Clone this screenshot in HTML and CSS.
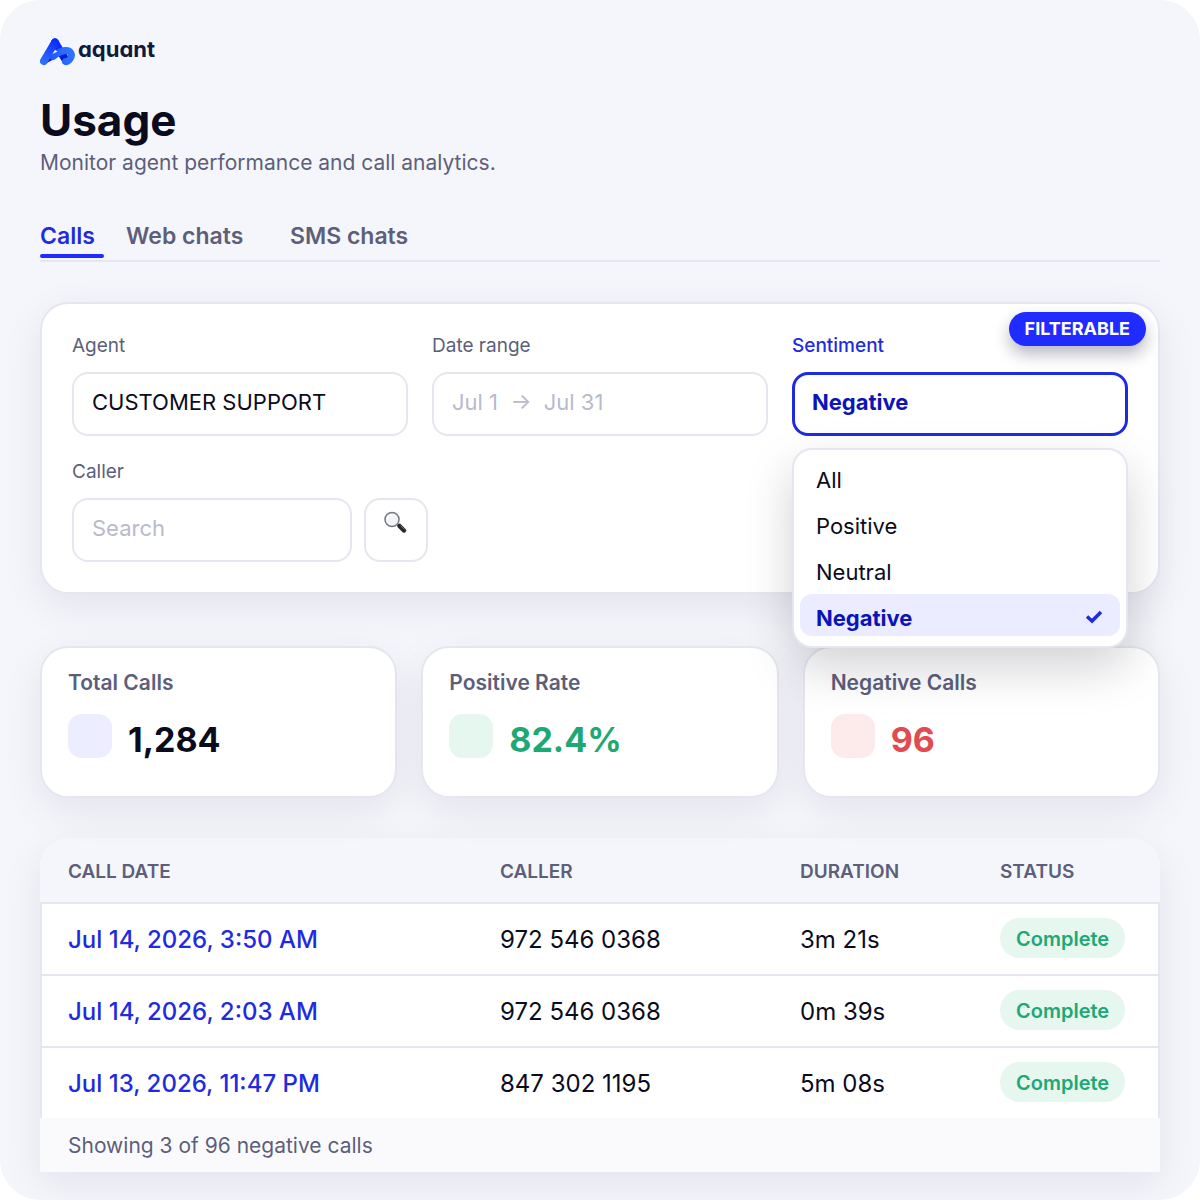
FILE: index.html
```html
<!DOCTYPE html>
<html lang="en">
<head>
<meta charset="UTF-8">
<meta name="viewport" content="width=device-width, initial-scale=1.0">
<title>Usage - aquant</title>
<link rel="stylesheet" href="styles.css">
</head>
<body>

<main class="page">
    <div class="logo">
        <svg class="logo-mark" width="36" height="28" viewBox="0 0 36 28" fill="none" stroke-linecap="round" stroke-linejoin="round" aria-hidden="true">
            <defs>
                <linearGradient id="leg" x1="4" y1="24" x2="16" y2="3" gradientUnits="userSpaceOnUse">
                    <stop offset="0" stop-color="#2f6dff"/>
                    <stop offset="1" stop-color="#0a2cff"/>
                </linearGradient>
                <linearGradient id="back" x1="15" y1="4" x2="26" y2="24" gradientUnits="userSpaceOnUse">
                    <stop offset="0" stop-color="#0a2cff"/>
                    <stop offset="0.6" stop-color="#0a2cff"/>
                    <stop offset="0.8" stop-color="#0617b0"/>
                    <stop offset="1" stop-color="#1030e0"/>
                </linearGradient>
                <linearGradient id="loop" x1="5" y1="24" x2="31" y2="14" gradientUnits="userSpaceOnUse">
                    <stop offset="0" stop-color="#1c50ff"/>
                    <stop offset="1" stop-color="#2f74ff"/>
                </linearGradient>
            </defs>
            <path d="M15 4.500 L26 22.500" stroke="url(#back)" stroke-width="8"/>
            <path d="M4 23 C11 22 16 14.500 24 12.500" stroke="#0617b0" stroke-width="5"/>
            <path d="M4 23 L15 4.500" stroke="url(#leg)" stroke-width="8"/>
            <path d="M13 18.500 C17 15.500 20 13 25 12.500 C31 12 33 17 30 21 C28.500 23 27 24 25.500 23.500" stroke="url(#loop)" stroke-width="7"/>
            <path d="M12.500 16 L15 12 L17.500 13.500 Z" fill="#f5f6fb"/>
        </svg>
        <span class="logo-name">aquant</span>
    </div>

    <h1 class="title">Usage</h1>
    <p class="subtitle">Monitor agent performance and call analytics.</p>

    <nav class="tabs">
        <button class="tab active" type="button">Calls</button>
        <button class="tab" type="button">Web chats</button>
        <button class="tab" type="button">SMS chats</button>
    </nav>

    <form class="filters">
        <span class="badge">FILTERABLE</span>

        <div class="field">
            <label for="agent">Agent</label>
            <input class="control" id="agent" type="text" value="CUSTOMER SUPPORT">
        </div>

        <div class="field">
            <label for="dates">Date range</label>
            <input class="control" id="dates" type="text" placeholder="Jul 1  →  Jul 31">
        </div>

        <div class="field field-sentiment">
            <label for="sentiment">Sentiment</label>
            <select class="control" id="sentiment">
                <option>All</option>
                <option>Positive</option>
                <option>Neutral</option>
                <option selected>Negative</option>
            </select>
            <ul class="menu">
                <li><button class="menu-item" type="button">All</button></li>
                <li><button class="menu-item" type="button">Positive</button></li>
                <li><button class="menu-item" type="button">Neutral</button></li>
                <li>
                    <button class="menu-item selected" type="button">
                        Negative
                        <svg width="20" height="20" viewBox="0 0 20 20" fill="none" stroke="#1f2be0" stroke-width="3.500" aria-hidden="true">
                            <path d="M3 8.500 L8 13 L17 4"/>
                        </svg>
                    </button>
                </li>
            </ul>
        </div>

        <div class="field field-caller">
            <label for="caller">Caller</label>
            <div class="search">
                <input class="control" id="caller" type="text" placeholder="Search">
                <button class="search-btn" type="submit" aria-label="Search">
                    <svg width="24" height="24" viewBox="0 0 24 24" fill="none" aria-hidden="true">
                        <path d="M12.500 12.500 L16 16" stroke="#8b9096" stroke-width="2"/>
                        <path d="M15.500 15 L20 19.500" stroke="#25282c" stroke-width="4.500" stroke-linecap="round"/>
                        <path d="M16.500 14.500 L20.500 18.500" stroke="#6b6f75" stroke-width="1"/>
                        <circle cx="8" cy="8.500" r="7" fill="#f1f5f6" stroke="#73797f" stroke-width="1.500"/>
                        <path d="M3.500 8 A4.500 4.500 0 0 1 7.500 4" stroke="#ffffff" stroke-width="1.500"/>
                    </svg>
                </button>
            </div>
        </div>
    </form>

    <section class="stats">
        <div class="stat">
            <div class="stat-label">Total Calls</div>
            <div class="stat-row">
                <span class="stat-icon blue"></span>
                <span class="stat-value">1,284</span>
            </div>
        </div>
        <div class="stat">
            <div class="stat-label">Positive Rate</div>
            <div class="stat-row">
                <span class="stat-icon green"></span>
                <span class="stat-value positive">82.4%</span>
            </div>
        </div>
        <div class="stat">
            <div class="stat-label">Negative Calls</div>
            <div class="stat-row">
                <span class="stat-icon red"></span>
                <span class="stat-value negative">96</span>
            </div>
        </div>
    </section>

    <section class="calls">
        <table class="calls-table">
            <colgroup>
                <col>
                <col class="col-caller">
                <col class="col-duration">
                <col class="col-status">
            </colgroup>
            <thead>
                <tr>
                    <th>CALL DATE</th>
                    <th>CALLER</th>
                    <th>DURATION</th>
                    <th>STATUS</th>
                </tr>
            </thead>
            <tbody>
                <tr>
                    <td><a href="#">Jul 14, 2026, 3:50 AM</a></td>
                    <td>972 546 0368</td>
                    <td>3m 21s</td>
                    <td><span class="pill">Complete</span></td>
                </tr>
                <tr>
                    <td><a href="#">Jul 14, 2026, 2:03 AM</a></td>
                    <td>972 546 0368</td>
                    <td>0m 39s</td>
                    <td><span class="pill">Complete</span></td>
                </tr>
                <tr>
                    <td><a href="#">Jul 13, 2026, 11:47 PM</a></td>
                    <td>847 302 1195</td>
                    <td>5m 08s</td>
                    <td><span class="pill">Complete</span></td>
                </tr>
            </tbody>
        </table>
        <div class="calls-footer">Showing 3 of 96 negative calls</div>
    </section>
</main>

</body>
</html>
```
FILE: styles.css
```css
* {
    box-sizing: border-box;
}

body {
    margin: 0;
    background: #ffffff;
    color: #0b0b1e;
    font-family: Inter, "Liberation Sans", sans-serif;
    font-size: 22px;
}

button, input, select {
    font: inherit;
    color: inherit;
}

.page {
    min-height: 100vh;
    padding: 38px 40px 28px;
    background: #f5f6fb;
    border-radius: 40px;
    overflow: hidden;
}

/* header */

.logo {
    display: flex;
    gap: 2px;
    height: 28px;
}

.logo-name {
    font-size: 22px;
    font-weight: 700;
    line-height: 22px;
    color: #0f1a3c;
    font-feature-settings: "cv11";
}

.title {
    margin: 26px 0 0;
    font-size: 44px;
    font-weight: 700;
    line-height: 56px;
}

.subtitle {
    margin: 0;
    font-size: 21px;
    line-height: 30px;
    color: #5d5f7a;
}

.tabs {
    display: grid;
    grid-template-columns: 64px 142px auto;
    justify-content: start;
    gap: 22px;
    margin-top: 42px;
    padding-bottom: 2px;
    border-bottom: 2px solid #e6e6f0;
}

.tab {
    padding: 0;
    border: 0;
    background: none;
    text-align: left;
    font-size: 23px;
    font-weight: 600;
    line-height: 32px;
    color: #5d5f7a;
    cursor: pointer;
}

.tab::after {
    content: "";
    display: block;
    height: 4px;
    margin-top: 2px;
    border-radius: 2px;
}

.tab.active {
    color: #1f2be0;
}

.tab.active::after {
    background: #1f2bff;
}

/* filters */

.filters {
    position: relative;
    display: grid;
    grid-template-columns: repeat(3, 1fr);
    gap: 22px 24px;
    margin-top: 40px;
    padding: 28px 30px 30px;
    background: #ffffff;
    border: 2px solid #e6e6f0;
    border-radius: 28px;
    box-shadow: 0 12px 40px rgba(16, 16, 60, 0.08);
}

.badge {
    position: absolute;
    top: 8px;
    right: 12px;
    padding: 0 16px;
    border-radius: 17px;
    background: #1f2bff;
    color: #ffffff;
    font-size: 18px;
    font-weight: 700;
    line-height: 34px;
    box-shadow: 0 8px 16px rgba(16, 16, 60, 0.3);
}

.field {
    display: flex;
    flex-direction: column;
    gap: 12px;
    min-width: 0;
}

.field label {
    font-size: 19px;
    line-height: 28px;
    color: #5d5f7a;
}

.control {
    appearance: none;
    width: 100%;
    height: 64px;
    padding: 0 18px 4px;
    background: #ffffff;
    border: 2px solid #e6e6f0;
    border-radius: 16px;
    outline: none;
}

.control::placeholder {
    color: #b9bacb;
    opacity: 1;
    white-space: pre;
}

.field-sentiment {
    position: relative;
}

.field-sentiment label {
    color: #1f2be0;
    font-weight: 500;
}

.field-sentiment .control {
    padding: 0 17px 4px;
    border: 3px solid #1f2be0;
    color: #0a14b8;
    font-weight: 700;
}

.menu {
    position: absolute;
    top: 116px;
    left: 0;
    right: 0;
    z-index: 1;
    display: grid;
    gap: 4px;
    margin: 0;
    padding: 6px 6px 10px;
    list-style: none;
    background: #ffffff;
    border: 2px solid #e6e6f0;
    border-radius: 20px;
    box-shadow: 0 20px 48px rgba(11, 11, 30, 0.18);
}

.menu-item {
    display: flex;
    align-items: center;
    justify-content: space-between;
    width: 100%;
    height: 42px;
    padding: 6px 16px 0;
    border: 0;
    border-radius: 12px;
    background: none;
    cursor: pointer;
}

.menu-item.selected {
    background: #ebecff;
    color: #0a14b8;
    font-weight: 700;
}

.field-caller {
    grid-column: 1 / span 2;
}

.search {
    display: flex;
    gap: 12px;
}

.search .control {
    width: 280px;
}

.search-btn {
    width: 64px;
    height: 64px;
    padding: 0 0 14px;
    background: #ffffff;
    border: 2px solid #e6e6f0;
    border-radius: 16px;
    line-height: 0;
    cursor: pointer;
}

/* stat cards */

.stats {
    display: grid;
    grid-template-columns: repeat(3, 1fr);
    gap: 24px;
    margin-top: 52px;
}

.stat {
    padding: 20px 26px 30px;
    background: #ffffff;
    border: 2px solid #e6e6f0;
    border-radius: 28px;
    box-shadow: 0 12px 40px rgba(16, 16, 60, 0.08);
}

.stat-label {
    font-size: 21px;
    font-weight: 600;
    line-height: 30px;
    color: #5d5f7a;
}

.stat-row {
    display: flex;
    gap: 16px;
    margin-top: 16px;
}

.stat-icon {
    width: 44px;
    height: 44px;
    border-radius: 14px;
}

.stat-icon.blue {
    background: #ecedff;
}

.stat-icon.green {
    background: #e5f7ef;
}

.stat-icon.red {
    background: #fdeaea;
}

.stat-value {
    font-size: 34px;
    font-weight: 700;
    line-height: 52px;
}

.stat-value.positive {
    color: #1fa774;
}

.stat-value.negative {
    color: #e04a50;
}

/* calls table */

.calls {
    margin-top: 40px;
    border-radius: 28px 28px 0 0;
    box-shadow: 0 12px 40px rgba(16, 16, 60, 0.08);
}

.calls-table {
    width: 100%;
    table-layout: fixed;
    border-collapse: separate;
    border-spacing: 0;
    font-size: 24px;
}

.col-caller {
    width: 300px;
}

.col-duration {
    width: 200px;
}

.col-status {
    width: 160px;
}

.calls-table th {
    height: 66px;
    padding: 2px 0 0;
    background: #f5f6fb;
    border-bottom: 2px solid #e6e6f0;
    text-align: left;
    font-size: 19px;
    font-weight: 600;
    color: #5d5f7a;
}

.calls-table th:first-child {
    padding-left: 28px;
    border-top-left-radius: 28px;
}

.calls-table th:last-child {
    border-top-right-radius: 28px;
}

.calls-table td {
    height: 72px;
    padding: 0;
    background: #ffffff;
    border-bottom: 2px solid #e6e6f0;
}

.calls-table tr:last-child td {
    height: 70px;
    border-bottom: 0;
}

.calls-table td:first-child {
    padding-left: 26px;
    border-left: 2px solid #e6e6f0;
}

.calls-table td:last-child {
    padding-bottom: 2px;
    border-right: 2px solid #e6e6f0;
}

.calls-table a {
    color: #1f2be0;
    font-weight: 500;
    text-decoration: none;
}

.pill {
    display: block;
    width: fit-content;
    padding: 2px 16px 0;
    border-radius: 20px;
    background: #e5f7ef;
    color: #1fa774;
    font-size: 20px;
    font-weight: 600;
    line-height: 38px;
}

.calls-footer {
    padding: 2px 28px 0;
    background: #fafafd;
    font-size: 21px;
    line-height: 52px;
    color: #5d5f7a;
}
```
